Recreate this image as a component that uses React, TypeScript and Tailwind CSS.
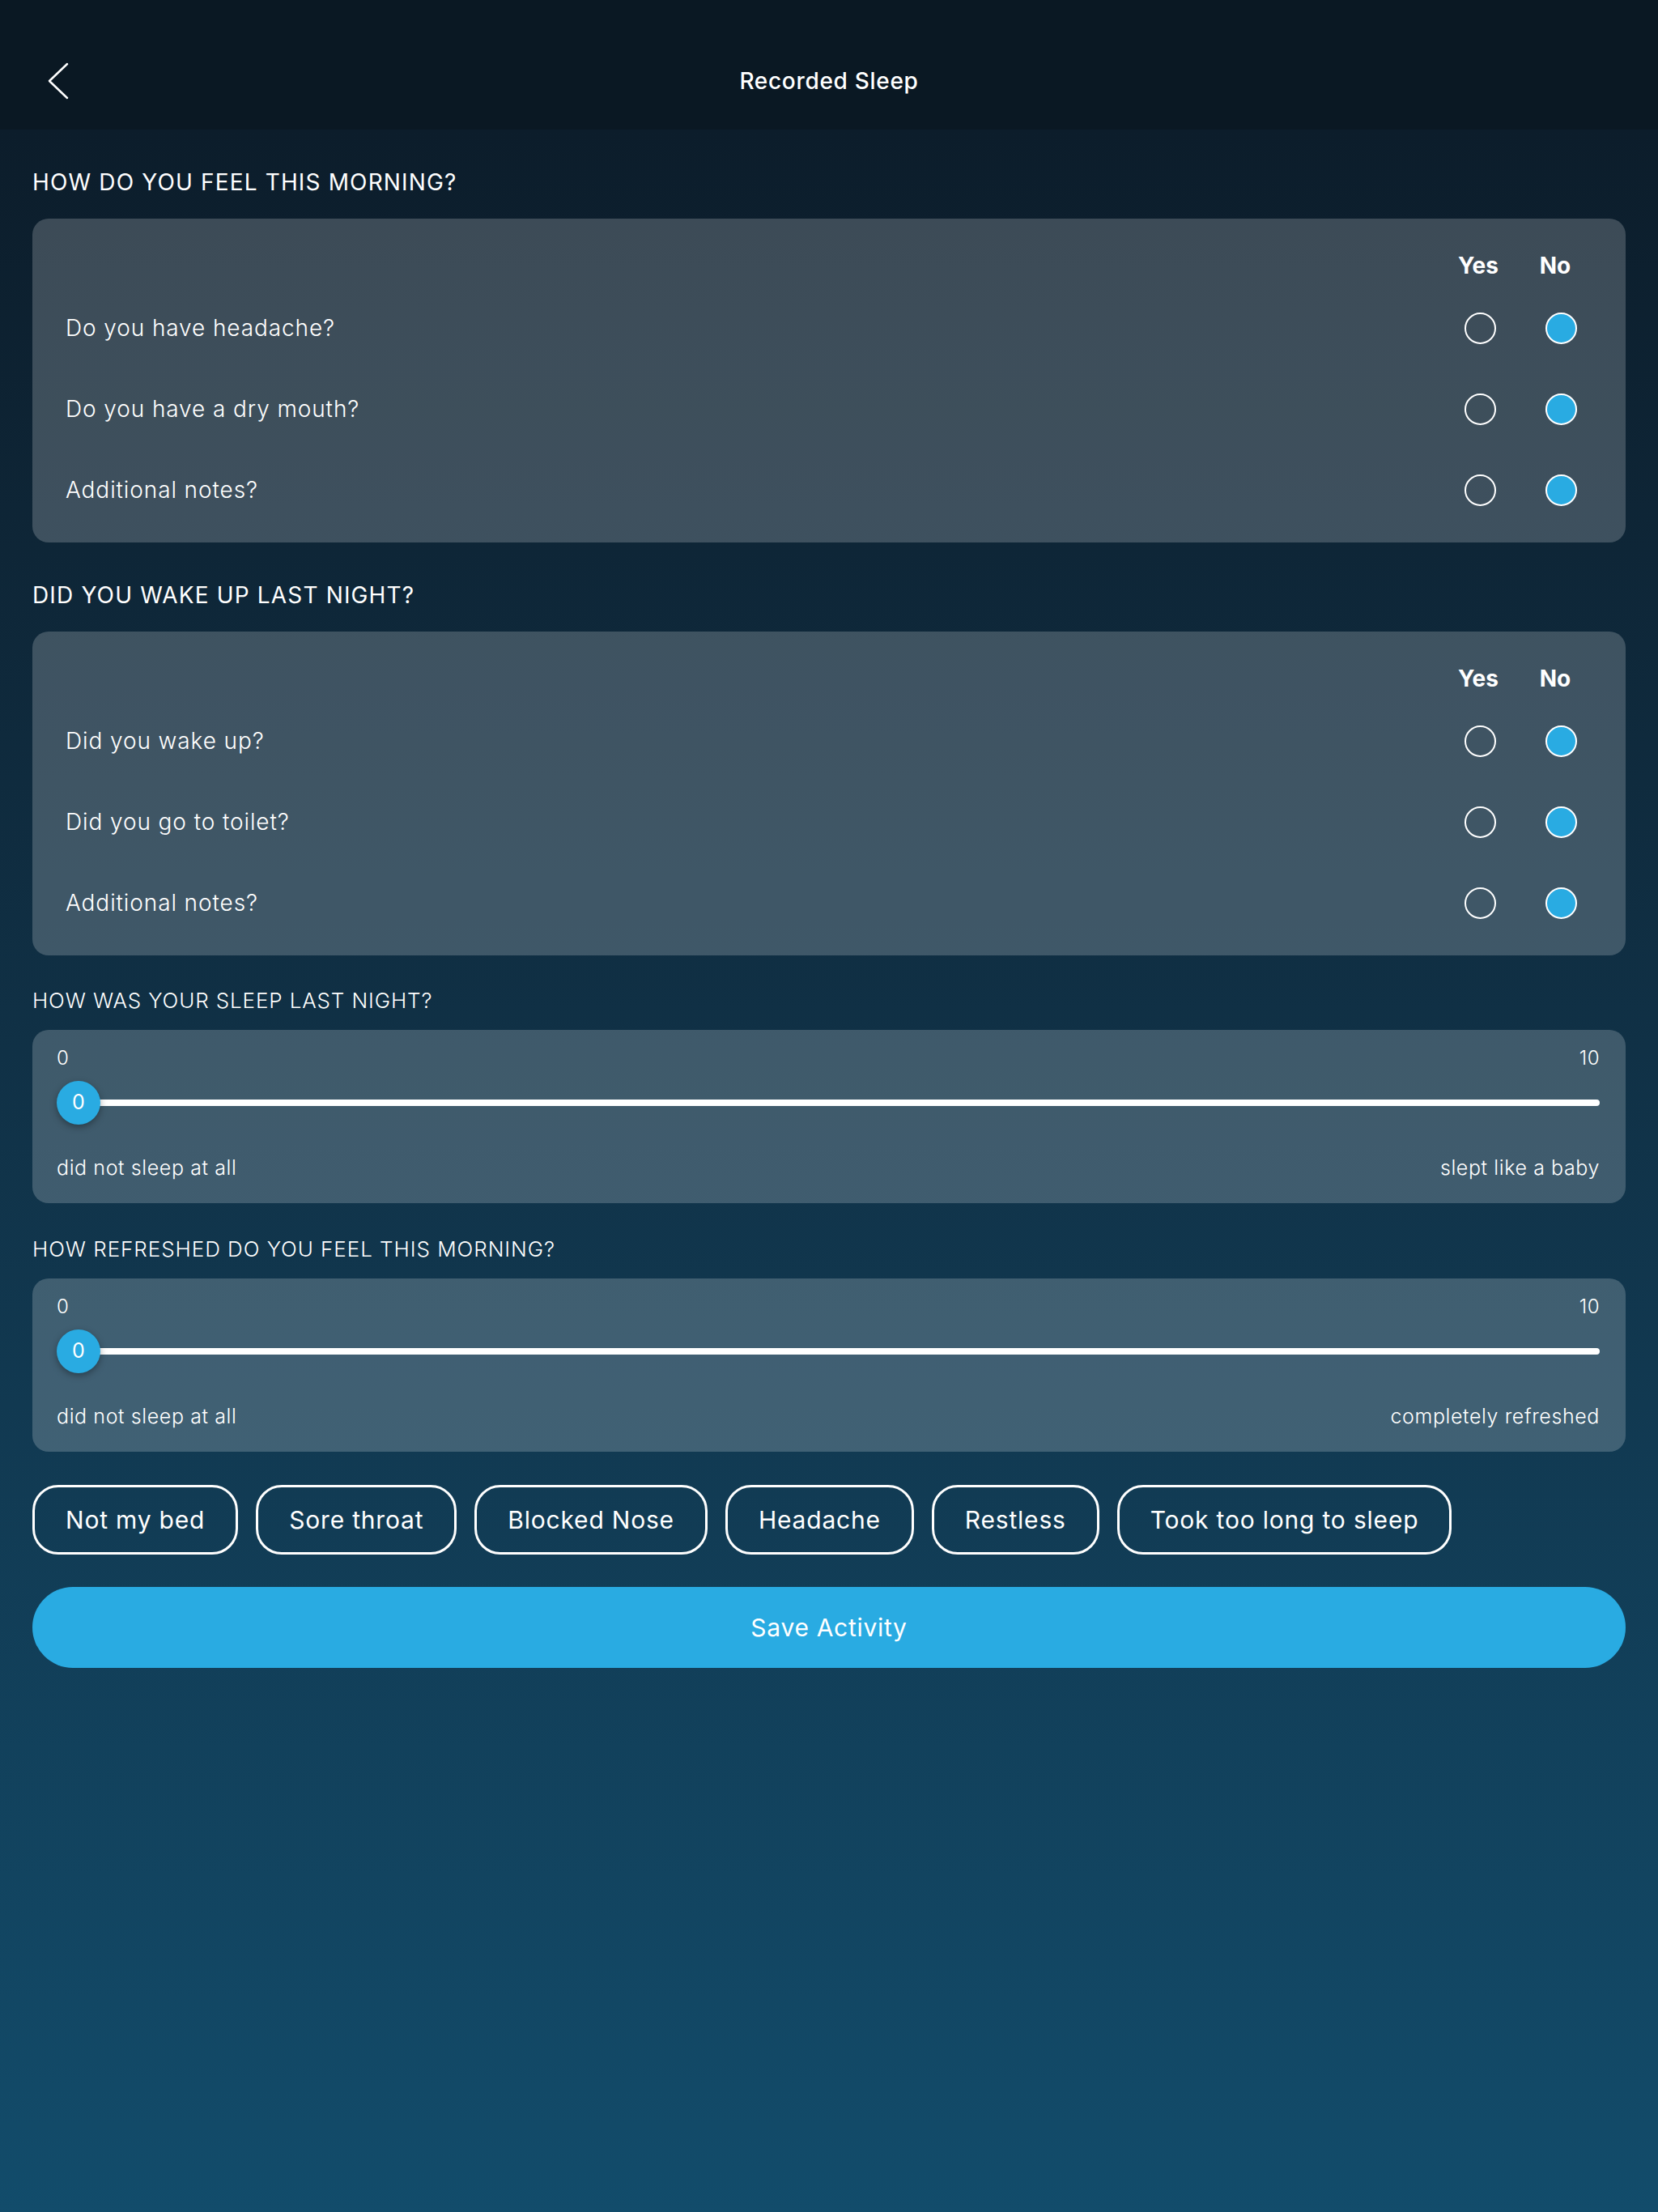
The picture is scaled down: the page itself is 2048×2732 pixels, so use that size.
import React from "react";

const FONT = { fontFamily: "Inter, 'Noto Sans', sans-serif" };

function Radio({ on }: { on: boolean }) {
  return (
    <div
      className={
        on
          ? "w-[39px] h-[39px] rounded-full border-2 border-white bg-[#29abe2]"
          : "w-[39px] h-[39px] rounded-full border-2 border-white"
      }
    />
  );
}

function QuestionCard({ questions }: { questions: string[] }) {
  return (
    <div className="rounded-[20px] bg-white/20 pt-[30px] pb-[15px] pl-[41px] pr-[30px]">
      <div className="flex h-[55px] items-center">
        <div className="flex-1" />
        <div className="w-[100px] flex justify-center pr-[4px] text-[28px] font-bold text-white">Yes</div>
        <div className="w-[100px] flex justify-center pr-[14px] text-[28px] font-bold text-white">No</div>
      </div>
      {questions.map((q) => (
        <div key={q} className="flex h-[100px] items-center">
          <div className="flex-1 text-[28px] font-light text-white tracking-[0.9px]">{q}</div>
          <div className="w-[100px] flex justify-center">
            <Radio on={false} />
          </div>
          <div className="w-[100px] flex justify-center">
            <Radio on={true} />
          </div>
        </div>
      ))}
    </div>
  );
}

function SliderCard({ left, right }: { left: string; right: string }) {
  return (
    <div className="rounded-[20px] bg-white/20 pt-[18px] pb-[26px] pl-[30px] pr-[32px] text-white">
      <div className="flex h-[34px] items-center justify-between text-[24px] font-light tracking-[0.5px]">
        <span>0</span>
        <span>10</span>
      </div>
      <div className="relative mt-[11px] flex h-[54px] items-center">
        <div className="ml-[27px] h-[8px] flex-1 rounded-full bg-white" />
        <div className="absolute left-0 top-0 flex h-[54px] w-[54px] items-center justify-center rounded-full bg-[#29abe2] text-[25px] shadow-[0_3px_8px_rgba(0,0,0,0.35)]">
          0
        </div>
      </div>
      <div className="mt-[37px] flex h-[34px] items-center justify-between text-[25px] font-light tracking-[0.6px]">
        <span>{left}</span>
        <span>{right}</span>
      </div>
    </div>
  );
}

const chips = ["Not my bed", "Sore throat", "Blocked Nose", "Headache", "Restless", "Took too long to sleep"];

export default function App() {
  return (
    <div className="flex min-h-[2732px] flex-col text-white" style={FONT}>
      <header className="grid h-[160px] grid-cols-[1fr_auto_1fr] items-center bg-[#0a1823] pt-[40px]">
        <div className="pl-[58px] flex items-center">
          <svg width="28" height="46" viewBox="0 0 28 46" fill="none">
            <polyline points="25,2 3,23 25,44" stroke="white" strokeWidth="2.5" strokeLinecap="round" strokeLinejoin="round" />
          </svg>
        </div>
        <div className="text-[28px] font-medium tracking-[0.7px]">Recorded Sleep</div>
        <div />
      </header>
      <main className="flex flex-1 flex-col bg-linear-to-b from-[#0c1d2b] to-[#124c6b] px-[40px]">
        <h2 className="mt-[45px] h-[40px] leading-[40px] text-[28px] font-normal tracking-[1.15px]">HOW DO YOU FEEL THIS MORNING?</h2>
        <div className="mt-[25px]">
          <QuestionCard questions={["Do you have headache?", "Do you have a dry mouth?", "Additional notes?"]} />
        </div>
        <h2 className="mt-[45px] h-[40px] leading-[40px] text-[28px] font-normal tracking-[1.15px]">DID YOU WAKE UP LAST NIGHT?</h2>
        <div className="mt-[25px]">
          <QuestionCard questions={["Did you wake up?", "Did you go to toilet?", "Additional notes?"]} />
        </div>
        <h2 className="mt-[38px] h-[36px] leading-[36px] text-[26px] font-light tracking-[0.87px]">HOW WAS YOUR SLEEP LAST NIGHT?</h2>
        <div className="mt-[18px]">
          <SliderCard left="did not sleep at all" right="slept like a baby" />
        </div>
        <h2 className="mt-[39px] h-[36px] leading-[36px] text-[26px] font-light tracking-[0.95px]">HOW REFRESHED DO YOU FEEL THIS MORNING?</h2>
        <div className="mt-[18px]">
          <SliderCard left="did not sleep at all" right="completely refreshed" />
        </div>
        <div className="mt-[41px] flex gap-[22px]">
          {chips.map((c) => (
            <div
              key={c}
              className="flex h-[86px] items-center rounded-[32px] border-[3px] border-white px-[38px] text-[30px] font-normal tracking-[0.8px]"
            >
              {c}
            </div>
          ))}
        </div>
        <button className="mt-[40px] flex h-[100px] w-full items-center justify-center rounded-full bg-[#29abe2] text-[30px] font-normal tracking-[0.7px] text-white">
          Save Activity
        </button>
      </main>
    </div>
  );
}
